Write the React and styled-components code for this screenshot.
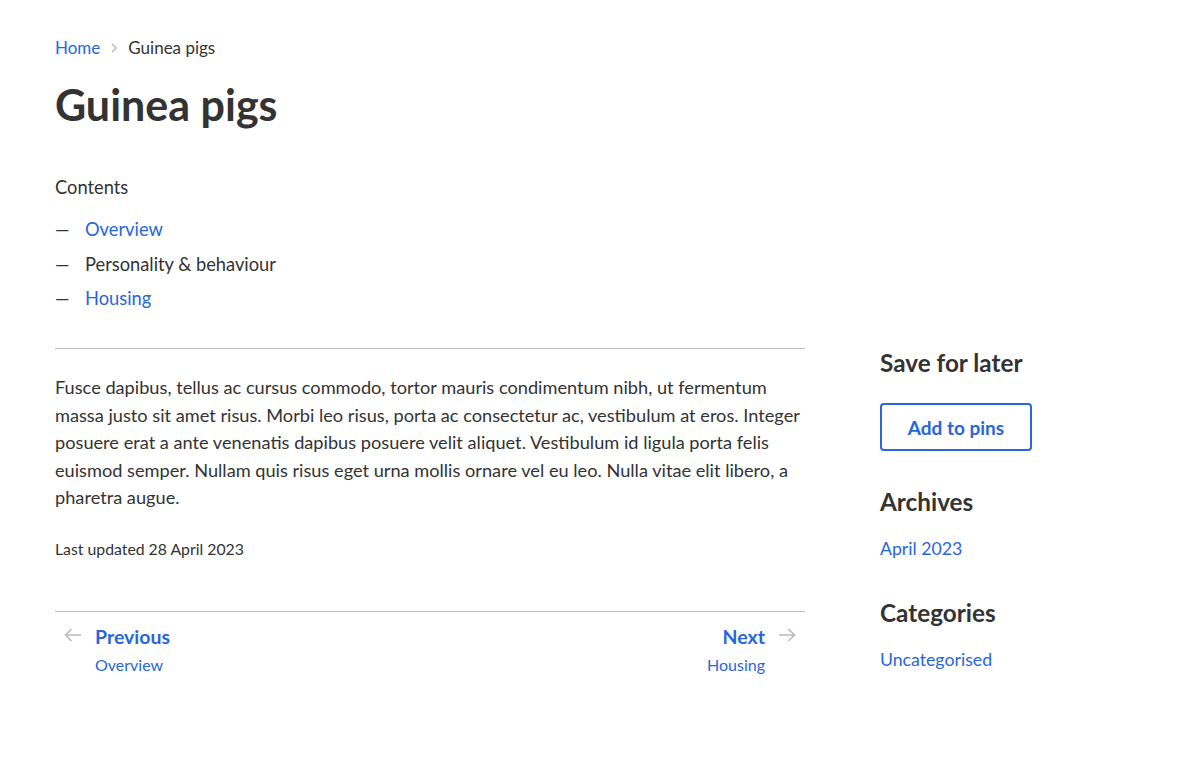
import React from 'react'
import styled, { createGlobalStyle } from 'styled-components'

const blue = '#2866dc'
const ink = '#333333'

const Global = createGlobalStyle`
  body {
    margin: 0;
    background: #fff;
    font-family: Lato, "Liberation Sans", sans-serif;
    color: ${ink};
  }
  a { color: ${blue}; text-decoration: none; }
`

const Page = styled.div`
  padding: 34px 55px 60px;
  max-width: 1000px;
`

const Crumbs = styled.nav`
  display: flex;
  align-items: center;
  gap: 10px;
  font-size: 17px;
  line-height: 28px;
`

const Chevron = () => (
  <svg width="8" height="12" viewBox="0 0 8 12">
    <path d="M2 2l4 4-4 4" fill="none" stroke="#bbb" strokeWidth="1.5" />
  </svg>
)

const Title = styled.h1`
  margin: 15px 0 40px;
  font-size: 43px;
  line-height: 56px;
  font-weight: 700;
`

const ContentsLabel = styled.div`
  font-size: 18.3px;
  line-height: 28px;
  margin-bottom: 14px;
`

const Toc = styled.ul`
  list-style: none;
  margin: 0 0 36px;
  padding: 0;
  display: flex;
  flex-direction: column;
  gap: 6.5px;
`

const TocItem = styled.li`
  display: flex;
  font-size: 18.3px;
  line-height: 28px;
  &::before {
    content: '—';
    width: 30px;
    color: ${ink};
  }
`

const Layout = styled.div`
  display: grid;
  grid-template-columns: 750px 1fr;
  gap: 75px;
`

const Main = styled.main`
  border-top: 1px solid #bfbfbf;
  padding-top: 25px;
`

const Body = styled.p`
  margin: 0 0 27px;
  font-size: 18.2px;
  line-height: 27.5px;
`

const Updated = styled.p`
  margin: 0 0 52px;
  font-size: 15.8px;
  line-height: 20px;
`

const Pager = styled.nav`
  border-top: 1px solid #bfbfbf;
  display: flex;
  justify-content: space-between;
  padding: 12px 9px 0;
`

const PageLink = styled.a`
  display: grid;
  grid-template-columns: ${p => (p.$next ? '1fr auto' : 'auto 1fr')};
  column-gap: 13px;
  row-gap: 2px;
  align-items: center;
  text-align: ${p => (p.$next ? 'right' : 'left')};
`

const PageTitle = styled.span`
  font-weight: 700;
  font-size: 19.5px;
  line-height: 26px;
`

const PageSub = styled.span`
  font-size: 16px;
  line-height: 26px;
  grid-column: ${p => (p.$next ? '1' : '2')};
`

const Arrow = ({ dir }) => (
  <svg width="18" height="14" viewBox="0 0 18 14" style={{ marginTop: -4 }}>
    {dir === 'left' ? (
      <path d="M17 7H1.5M7.5 1L1.5 7l6 6" fill="none" stroke="#bbb" strokeWidth="1.6" />
    ) : (
      <path d="M1 7h15.5M10.5 1l6 6-6 6" fill="none" stroke="#bbb" strokeWidth="1.6" />
    )}
  </svg>
)

const Side = styled.aside`
  padding-top: 2px;
`

const SideHeading = styled.h2`
  margin: 0 0 ${p => p.$gap || 22}px;
  font-size: 24.3px;
  line-height: 26px;
  font-weight: 700;
`

const Block = styled.section`
  margin-bottom: ${p => p.$gap || 36}px;
`

const PinButton = styled.button`
  font-family: inherit;
  font-size: 19px;
  font-weight: 700;
  color: ${blue};
  background: #fff;
  border: 2px solid ${blue};
  border-radius: 4px;
  width: 152px;
  height: 48px;
  cursor: pointer;
`

const SideLink = styled.a`
  font-size: 17.7px;
  line-height: 24px;
`

export default function App() {
  return (
    <Page>
      <Global />
      <Crumbs>
        <a href="#">Home</a>
        <Chevron />
        <span>Guinea pigs</span>
      </Crumbs>
      <Title>Guinea pigs</Title>
      <ContentsLabel>Contents</ContentsLabel>
      <Toc>
        <TocItem><a href="#">Overview</a></TocItem>
        <TocItem>Personality &amp; behaviour</TocItem>
        <TocItem><a href="#">Housing</a></TocItem>
      </Toc>
      <Layout>
        <Main>
          <Body>
            Fusce dapibus, tellus ac cursus commodo, tortor mauris condimentum nibh, ut fermentum
            massa justo sit amet risus. Morbi leo risus, porta ac consectetur ac, vestibulum at eros.
            Integer posuere erat a ante venenatis dapibus posuere velit aliquet. Vestibulum id ligula
            porta felis euismod semper. Nullam quis risus eget urna mollis ornare vel eu leo. Nulla
            vitae elit libero, a pharetra augue.
          </Body>
          <Updated>Last updated 28 April 2023</Updated>
          <Pager>
            <PageLink href="#">
              <Arrow dir="left" />
              <PageTitle>Previous</PageTitle>
              <PageSub>Overview</PageSub>
            </PageLink>
            <PageLink href="#" $next>
              <PageTitle>Next</PageTitle>
              <Arrow dir="right" />
              <PageSub $next>Housing</PageSub>
            </PageLink>
          </Pager>
        </Main>
        <Side>
          <Block $gap={38}>
            <SideHeading $gap={27}>Save for later</SideHeading>
            <PinButton>Add to pins</PinButton>
          </Block>
          <Block $gap={39}>
            <SideHeading $gap={22}>Archives</SideHeading>
            <SideLink href="#">April 2023</SideLink>
          </Block>
          <Block>
            <SideHeading $gap={22}>Categories</SideHeading>
            <SideLink href="#">Uncategorised</SideLink>
          </Block>
        </Side>
      </Layout>
    </Page>
  )
}
